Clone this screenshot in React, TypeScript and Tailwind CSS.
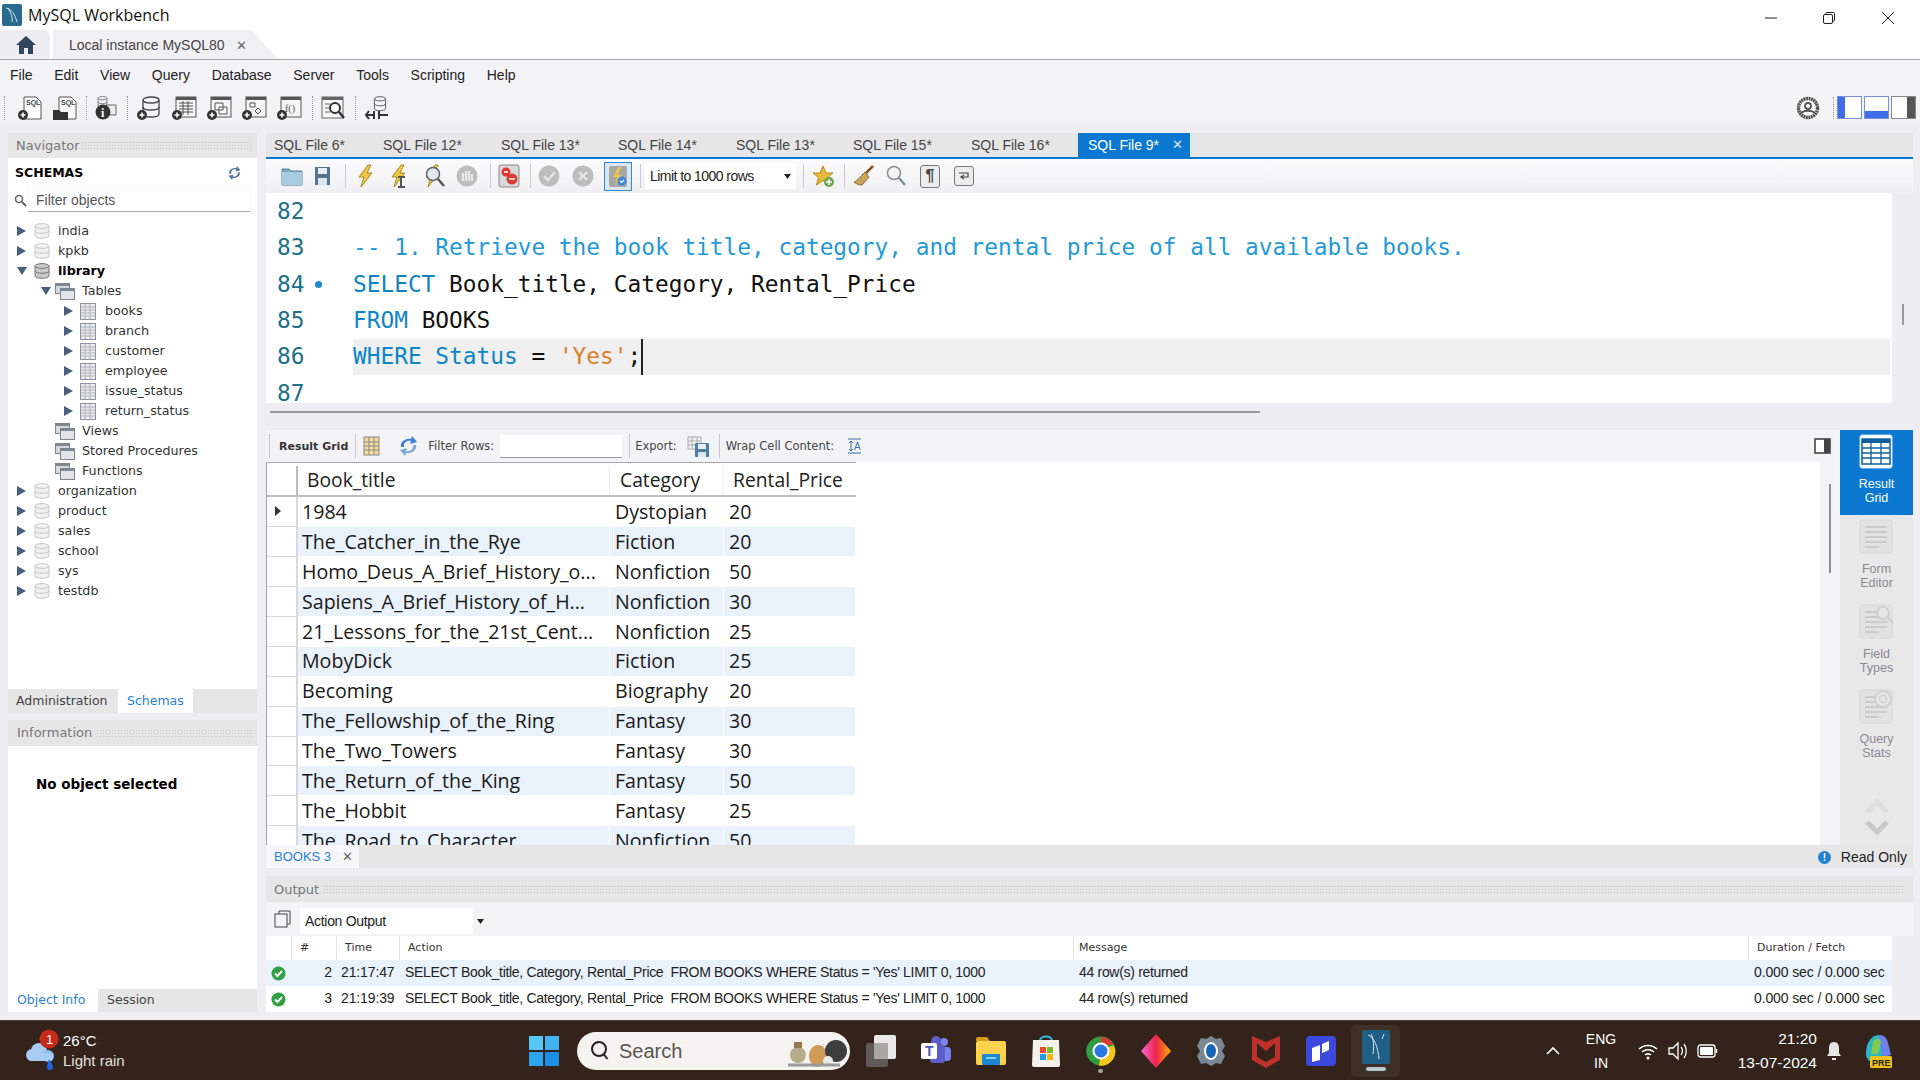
import React from "react";

const mono = "font-['DejaVu_Sans_Mono',monospace]";
const tahoma = "font-['DejaVu_Sans',sans-serif]";
const arial = "font-['Liberation_Sans',sans-serif]";
const segoe = "font-['Open_Sans',sans-serif]";
const dots = "flex-1 h-[9px] bg-[radial-gradient(#c2c2c2_0.8px,transparent_0.9px)] bg-[length:3px_3px]";

function Plus({ x = 0, y = 14 }: { x?: number; y?: number }) {
  return (
    <g transform={`translate(${x} ${y})`}>
      <circle cx="5" cy="5" r="5" fill="#333" />
      <path d="M2.5 5h5M5 2.5v5" stroke="#fff" strokeWidth="1.6" />
    </g>
  );
}

function Svg({ w = 25, h = 24, children }: { w?: number; h?: number; children: React.ReactNode }) {
  return (
    <svg width={w} height={h} viewBox={`0 0 ${w} ${h}`} className="block shrink-0">
      {children}
    </svg>
  );
}

function Sep() {
  return <div className="w-px h-[24px] bg-[#c9c9d0] shrink-0" />;
}

function SqlPage({ open }: { open?: boolean }) {
  return (
    <Svg>
      <path d="M6 1h12l5 5v17H6z" fill="#fff" stroke="#555" />
      <text x="8" y="9" fontSize="7" fontWeight="700" fill="#444" fontFamily="Liberation Sans">SQL</text>
      {open ? <path d="M0 14h6l2 2h7v8H0z" fill="#333" /> : <Plus y={14} />}
    </Svg>
  );
}

function DbGlyph({ x = 4, stroke = "#444", fill = "#f3f3f6" }: { x?: number; stroke?: string; fill?: string }) {
  return (
    <g fill={fill} stroke={stroke} strokeWidth="1.3">
      <path d={`M${x} 4v14c0 4 16 4 16 0V4`} />
      <ellipse cx={x + 8} cy="4" rx="8" ry="3" />
      <path d={`M${x} 11c0 4 16 4 16 0`} fill="none" />
    </g>
  );
}

function GridPage({ kind }: { kind: "table" | "view" | "proc" | "func" }) {
  return (
    <Svg>
      <rect x="4" y="1" width="20" height="20" fill="#f5f5f5" stroke="#555" />
      <rect x="4" y="1" width="20" height="3" fill="#555" />
      {kind === "table" && <path d="M7 7h14M7 10h14M7 13h14M7 16h14M11 5v14M16 5v14" stroke="#555" />}
      {kind === "view" && <path d="M8 7h8v7H8zM12 11h8v7h-8z" fill="none" stroke="#555" />}
      {kind === "proc" && <path d="M8 7h5v4H8zM16 12l3 3-3 3-3-3z" fill="none" stroke="#555" />}
      {kind === "func" && <text x="8" y="16" fontSize="10" fill="#555" fontFamily="Liberation Serif">f()</text>}
      <Plus y={14} />
    </Svg>
  );
}

function Bolt({ kind }: { kind?: "cursor" | "search" }) {
  return (
    <Svg>
      <path d="M14 1L5 13h5l-3 10 11-14h-5l4-8z" fill="#f0c543" stroke="#a88a2a" />
      {kind === "cursor" && <path d="M11 13h7M14 13v10M11 23h7" stroke="#555" strokeWidth="2" />}
      {kind === "search" && (
        <g>
          <circle cx="12" cy="10" r="6.5" fill="#dfe8ef" stroke="#666" strokeWidth="1.5" />
          <path d="M17 15l6 7" stroke="#555" strokeWidth="2.5" />
        </g>
      )}
    </Svg>
  );
}

function Round({ kind }: { kind: "check" | "cancel" | "hand" }) {
  return (
    <Svg>
      <circle cx="12" cy="12" r="10.5" fill="#bdbdbd" />
      {kind === "check" && <path d="M7 12l4 4 7-8" stroke="#e5e5e5" strokeWidth="2.4" fill="none" />}
      {kind === "cancel" && <path d="M8 8l8 8M16 8l-8 8" stroke="#e5e5e5" strokeWidth="2.4" />}
      {kind === "hand" && <path d="M8 17V9M11 17V7M14 17V7M17 17v-7" stroke="#e8e8e8" strokeWidth="2.2" />}
    </Svg>
  );
}

function TreeArrow({ open }: { open?: boolean }) {
  return open ? (
    <svg width="10" height="10" viewBox="0 0 10 10" className="block shrink-0"><path d="M0 1h10L5 9z" fill="#4a5f7e" /></svg>
  ) : (
    <svg width="9" height="10" viewBox="0 0 9 10" className="block shrink-0"><path d="M0 0l9 5-9 5z" fill="#4a5f7e" /></svg>
  );
}

function TreeDb({ active }: { active?: boolean }) {
  const stroke = active ? "#777" : "#c8c8c8";
  const fill = active ? "#c9c9c9" : "#f1f1f1";
  return (
    <svg width="16" height="16" viewBox="0 0 16 16" className="block shrink-0">
      <path d="M1 3v10c0 3 14 3 14 0V3" fill={fill} stroke={stroke} />
      <ellipse cx="8" cy="3" rx="7" ry="2.4" fill={fill} stroke={stroke} />
      <path d="M1 8c0 3 14 3 14 0" fill="none" stroke={stroke} />
    </svg>
  );
}

function TreeFolder() {
  return (
    <svg width="20" height="17" viewBox="0 0 20 17" className="block shrink-0">
      <rect x="0.5" y="0.5" width="14" height="10" fill="#d4d8dc" stroke="#7d8790" />
      <rect x="0.5" y="0.5" width="14" height="2.5" fill="#7d8790" />
      <rect x="5.5" y="5.5" width="14" height="11" fill="#e2e4e7" stroke="#7d8790" />
      <rect x="5.5" y="5.5" width="14" height="2.5" fill="#7d8790" />
    </svg>
  );
}

function TreeTable() {
  return (
    <svg width="16" height="17" viewBox="0 0 16 17" className="block shrink-0">
      <rect x="0.5" y="0.5" width="15" height="16" fill="#e9ebee" stroke="#8d959d" />
      <path d="M1 4h14M1 7h14M1 10h14M1 13h14M5 1v15M10 1v15" stroke="#b0b6bc" />
    </svg>
  );
}

function TreeRow({ level, label, kind, bold, arrow }: { level: 0 | 1 | 2; label: string; kind: "db" | "folder" | "table"; bold?: boolean; arrow?: "open" | "closed" }) {
  const arrowSlot = level === 0 ? "ml-[9px] w-[17px]" : level === 1 ? "ml-[33px] w-[14px]" : "ml-[56px] w-[16px]";
  const gap = bold || kind === "db" ? "ml-[8px]" : kind === "table" ? "ml-[9px]" : "ml-[7px]";
  return (
    <div className="flex items-center h-[20px]">
      <div className={arrowSlot}>{arrow && <TreeArrow open={arrow === "open"} />}</div>
      {kind === "db" && <TreeDb active={bold} />}
      {kind === "folder" && <TreeFolder />}
      {kind === "table" && <TreeTable />}
      <span className={`${tahoma} text-[12.7px] ${gap} ${bold ? "font-bold text-black" : "text-[#333]"}`}>{label}</span>
    </div>
  );
}

function Refresh({ w = 21, h = 20, c1 = "#3f7fd6", c2 = "#7fa6d8" }: { w?: number; h?: number; c1?: string; c2?: string }) {
  return (
    <svg width={w} height={h} viewBox="0 0 21 20" className="block shrink-0">
      <path d="M3 11C2 6 7 2 13 3l1-3 5 6-7 2 1-3C9 4 5 7 6 11z" fill={c1} />
      <path d="M18 9c1 5-4 9-10 8l-1 3-5-6 7-2-1 3c4 1 8-2 7-6z" fill={c2} />
    </svg>
  );
}

function Navigator() {
  return (
    <aside className="ml-[8px] w-[249px] shrink-0 flex flex-col">
      <div className="h-[25px] bg-[#e6e6e6] flex items-center pl-[8px] pr-[6px] gap-[1px]">
        <span className={`${tahoma} text-[13px] text-[#777]`}>Navigator</span>
        <div className={dots} />
      </div>
      <div className="h-[531px] bg-white flex flex-col">
        <div className="h-[30px] flex items-center justify-between pl-[7px] pr-[15px]">
          <span className={`${tahoma} text-[12.5px] font-bold text-black`}>SCHEMAS</span>
          <Refresh w={15} h={14} c1="#5d7690" c2="#5d7690" />
        </div>
        <div className="flex items-center h-[24px]">
          <svg width="13" height="13" viewBox="0 0 13 13" className="ml-[6px]"><circle cx="5" cy="5" r="3.5" fill="none" stroke="#666" strokeWidth="1.6" /><path d="M8 8l4 4" stroke="#666" strokeWidth="2" /></svg>
          <div className={`ml-[1px] w-[222px] h-[24px] border-b border-[#aaa] flex items-center pl-[8px] pt-[1px] ${arial} text-[14px] text-[#555] shadow-[0_0_1px_#ccc]`}>Filter objects</div>
        </div>
        <div className="pt-[9px]">
          <TreeRow level={0} label="india" kind="db" arrow="closed" />
          <TreeRow level={0} label="kpkb" kind="db" arrow="closed" />
          <TreeRow level={0} label="library" kind="db" bold arrow="open" />
          <TreeRow level={1} label="Tables" kind="folder" arrow="open" />
          {["books", "branch", "customer", "employee", "issue_status", "return_status"].map((t) => (
            <TreeRow key={t} level={2} label={t} kind="table" arrow="closed" />
          ))}
          {["Views", "Stored Procedures", "Functions"].map((t) => (
            <TreeRow key={t} level={1} label={t} kind="folder" />
          ))}
          {["organization", "product", "sales", "school", "sys", "testdb"].map((t) => (
            <TreeRow key={t} level={0} label={t} kind="db" arrow="closed" />
          ))}
        </div>
      </div>
      <div className={`h-[24px] bg-[#e6e6e6] flex ${tahoma} text-[12.5px]`}>
        <div className="w-[110px] flex items-center pl-[8px] text-[#444]">Administration</div>
        <div className="w-[75px] bg-white flex items-center pl-[9px] text-[#2c7fd6]">Schemas</div>
      </div>
      <div className="h-[26px] mt-[7px] bg-[#e6e6e6] flex items-center pl-[9px] pr-[6px] gap-[4px]">
        <span className={`${tahoma} text-[13px] text-[#777]`}>Information</span>
        <div className={dots} />
      </div>
      <div className="h-[243px] bg-white pl-[28px] pt-[25px]">
        <span className={`${tahoma} text-[13.5px] font-bold text-black`}>No object selected</span>
      </div>
      <div className={`h-[23px] bg-[#e6e6e6] flex ${tahoma} text-[12.5px]`}>
        <div className="w-[90px] bg-white flex items-center pl-[9px] text-[#2c7fd6]">Object Info</div>
        <div className="flex items-center pl-[9px] text-[#444]">Session</div>
      </div>
    </aside>
  );
}

const sqlTabs = [
  { t: "SQL File 6*", w: "w-[109px]" },
  { t: "SQL File 12*", w: "w-[118px]" },
  { t: "SQL File 13*", w: "w-[117px]" },
  { t: "SQL File 14*", w: "w-[118px]" },
  { t: "SQL File 13*", w: "w-[117px]" },
  { t: "SQL File 15*", w: "w-[118px]" },
  { t: "SQL File 16*", w: "w-[118px]" },
];

function SqlToolbar() {
  return (
    <div className="h-[34px] bg-gradient-to-b from-[#fbfbfc] to-[#f0f0f3] flex items-center shrink-0">
      <div className="ml-[15px]">
        <Svg w={22} h={20}><path d="M1 3h7l2 2h11v14H1z" fill="#7fa9c2" stroke="#5b7e96" /><rect x="1" y="6" width="20" height="13" fill="#a9cbe0" /></Svg>
      </div>
      <div className="ml-[11px]">
        <Svg w={17} h={20}><path d="M1 1h15v18H1z" fill="#55758e" /><rect x="4" y="2" width="9" height="6" fill="#e8eef2" /><rect x="4" y="12" width="9" height="7" fill="#dfe6eb" /></Svg>
      </div>
      <div className="ml-[14px]"><Sep /></div>
      <div className="ml-[8px]"><Bolt /></div>
      <div className="ml-[8px]"><Bolt kind="cursor" /></div>
      <div className="ml-[9px]"><Bolt kind="search" /></div>
      <div className="ml-[9px]"><Round kind="hand" /></div>
      <div className="ml-[10px]"><Sep /></div>
      <div className="ml-[7px]">
        <Svg w={22} h={24}>
          <rect x="1" y="1" width="20" height="22" rx="2" fill="#d9d9d9" stroke="#888" />
          <circle cx="8" cy="8" r="4.5" fill="#d93a32" />
          <circle cx="14" cy="15" r="5.5" fill="#d93a32" />
          <path d="M6 8h4M11 15h6" stroke="#fff" strokeWidth="1.6" />
        </Svg>
      </div>
      <div className="ml-[10px]"><Sep /></div>
      <div className="ml-[6px]"><Round kind="check" /></div>
      <div className="ml-[9px]"><Round kind="cancel" /></div>
      <div className="ml-[8px] w-[28px] h-[29px] border border-[#2f8ad6] bg-[#dbe6f0] flex items-center justify-center">
        <Svg w={20} h={23}>
          <rect x="1" y="1" width="18" height="21" rx="2" fill="#a7a7a7" />
          <path d="M10 2L5 12h4l-2 8 7-10h-4l3-8z" fill="#e8c552" />
          <circle cx="14" cy="16" r="4.5" fill="#3d88d6" />
          <path d="M12 16l1.5 1.5L16 15" stroke="#fff" strokeWidth="1.2" fill="none" />
        </Svg>
      </div>
      <div className="ml-[8px]"><Sep /></div>
      <div className={`ml-[4px] w-[151px] h-[26px] bg-white flex items-center justify-between pl-[5px] pr-[5px] ${arial} text-[14px] tracking-[-0.55px] text-[#222]`}>
        <span>Limit to 1000 rows</span>
        <svg width="7" height="5" viewBox="0 0 7 5"><path d="M0 0h7L3.5 5z" fill="#222" /></svg>
      </div>
      <div className="ml-[7px]"><Sep /></div>
      <div className="ml-[9px]">
        <Svg w={22} h={24}>
          <path d="M10 2l3 7h7l-5.500 4.500L16.500 21 10 16.500 3.500 21l2-7.500L0 9h7z" fill="#e8b83a" stroke="#b98c1e" />
          <circle cx="16" cy="18" r="5" fill="#6aa64a" />
          <path d="M13 18h6M16 15v6" stroke="#fff" strokeWidth="1.5" />
        </Svg>
      </div>
      <div className="ml-[9px]"><Sep /></div>
      <div className="ml-[8px]">
        <Svg w={22} h={22}>
          <path d="M20 1L11 10" stroke="#7a5a2c" strokeWidth="2.5" />
          <path d="M12 7l4 5-7 8c-3 0-6-1-8-3 3-1 6-5 11-10z" fill="#c9a45c" stroke="#8e7238" />
        </Svg>
      </div>
      <div className="ml-[11px]">
        <Svg w={20} h={22}>
          <circle cx="8" cy="8" r="6.5" fill="#f4f4f4" stroke="#8d8d8d" strokeWidth="1.5" />
          <path d="M13 13l6 7" stroke="#7d8b98" strokeWidth="2.2" />
        </Svg>
      </div>
      <div className="ml-[14px] w-[20px] h-[23px] border border-[#777] rounded-[3px] bg-[#ececec] flex items-center justify-center text-[16px] font-bold text-[#444]">
        <span className={arial}>¶</span>
      </div>
      <div className="ml-[14px] w-[20px] h-[20px] border border-[#777] rounded-[3px] bg-[#ececec] flex items-center justify-center">
        <svg width="12" height="10" viewBox="0 0 12 10"><path d="M1 2h9v4H4M6 4L3 6l3 2" fill="none" stroke="#444" strokeWidth="1.2" /></svg>
      </div>
    </div>
  );
}

const kw = "text-[#0e85c6]";

function Editor() {
  const lines: React.ReactNode[] = [
    null,
    <span className="text-[#1f9ad8]">-- 1. Retrieve the book title, category, and rental price of all available books.</span>,
    <><span className={kw}>SELECT</span><span className="text-[#111]"> Book_title, Category, Rental_Price</span></>,
    <><span className={kw}>FROM</span><span className="text-[#111]"> BOOKS</span></>,
    <><span className={kw}>WHERE Status</span><span className="text-[#111]"> = </span><span className="text-[#d9822b]">'Yes'</span><span className="text-[#111]">;</span></>,
    null,
  ];
  return (
    <div className="h-[210px] flex shrink-0">
      <div className={`flex-1 bg-white overflow-hidden pt-[1px] rounded-br-[2px] ${mono} text-[22.8px]`}>
        {lines.map((line, i) => (
          <div key={i} className="flex items-center h-[36.3px]">
            <div className="w-[87px] shrink-0 flex items-center pl-[11px] pb-[2px]">
              <span className="text-[#1f7188] w-[29px]">{82 + i}</span>
              {i === 2 && <div className="ml-[9px] mt-[2px] w-[7px] h-[7px] rounded-full bg-[#1e88cf]" />}
            </div>
            <div className={`flex-1 h-full mr-[2px] flex items-center ${i === 4 ? "bg-[#efefef]" : ""}`}>
              <span className="whitespace-pre pb-[2px]">{line}</span>
              {i === 4 && <div className="w-[2px] h-[36px] bg-[#222]" />}
            </div>
          </div>
        ))}
      </div>
      <div className="w-[21px] shrink-0 flex justify-center pl-[1px]">
        <div className="mt-[111px] w-[2px] h-[21px] bg-[#999]" />
      </div>
    </div>
  );
}

const rows = [
  ["1984", "Dystopian", "20"],
  ["The_Catcher_in_the_Rye", "Fiction", "20"],
  ["Homo_Deus_A_Brief_History_o...", "Nonfiction", "50"],
  ["Sapiens_A_Brief_History_of_H...", "Nonfiction", "30"],
  ["21_Lessons_for_the_21st_Cent...", "Nonfiction", "25"],
  ["MobyDick", "Fiction", "25"],
  ["Becoming", "Biography", "20"],
  ["The_Fellowship_of_the_Ring", "Fantasy", "30"],
  ["The_Two_Towers", "Fantasy", "30"],
  ["The_Return_of_the_King", "Fantasy", "50"],
  ["The_Hobbit", "Fantasy", "25"],
  ["The_Road_to_Character", "Nonfiction", "50"],
];

function ResultGrid() {
  return (
    <div className="flex-1 h-[383px] bg-white overflow-hidden">
      <div className="w-[590px] border-l border-t border-[#a8a8a8]">
        <div className={`grid grid-cols-[31px_312px_114px_132px] h-[34px] pt-[3px] border-b-2 border-[#bdbdbd] ${segoe} text-[19.3px] text-[#222]`}>
          <div className="border-r-2 border-[#bdbdbd]" />
          <div className="border-r border-[#eee] pl-[9px] flex items-center">Book_title</div>
          <div className="border-r border-[#eee] pl-[10px] flex items-center">Category</div>
          <div className="pl-[9px] flex items-center">Rental_Price</div>
        </div>
        {rows.map((r, i) => (
          <div key={i} className={`grid grid-cols-[31px_312px_114px_132px] h-[29.94px] ${segoe} text-[19.6px] text-[#1a1a1a]`}>
            <div className="border-r-2 border-b border-[#d9d9d9] flex items-center pl-[8px]">
              {i === 0 && <svg width="6" height="10" viewBox="0 0 6 10"><path d="M0 0l6 5-6 5z" fill="#333" /></svg>}
            </div>
            {r.map((c, j) => (
              <div key={j} className={`flex items-center ${j === 0 ? "pl-[4px]" : "pl-[5px]"} border-b border-r border-white whitespace-nowrap overflow-hidden ${i % 2 === 1 ? "bg-[#e9f1fb]" : "bg-white"}`}>{c}</div>
            ))}
          </div>
        ))}
      </div>
    </div>
  );
}

function SideTile({ l1, l2, active, mark }: { l1: string; l2: string; active?: boolean; mark?: "search" | "clock" }) {
  return (
    <div className="flex flex-col items-center">
      <svg width="38" height="38" viewBox="0 0 38 38" className="block">
        <rect x="2" y="2" width="32" height="33" rx="2" fill={active ? "#fff" : "#e2e2e2"} stroke={active ? "#d4e6f5" : "#d8d8d8"} />
        {active ? (
          <g>
            <rect x="4" y="6" width="28" height="25" fill="none" stroke="#0f5f9e" strokeWidth="1.5" />
            <rect x="4" y="6" width="28" height="4" fill="#0f5f9e" />
            <path d="M4 15h28M4 20h28M4 25h28M13 10v21M23 10v21" stroke="#0f5f9e" strokeWidth="1.3" />
          </g>
        ) : (
          <path d="M7 9h22M7 14h22M7 19h22M7 24h22M7 29h14" stroke="#c4c4c4" strokeWidth="1.5" />
        )}
        {mark === "search" && <g><circle cx="25" cy="10" r="6" fill="#e6e6e6" stroke="#cfcfcf" strokeWidth="2" /><path d="M29 14l6 6" stroke="#cfcfcf" strokeWidth="2" /></g>}
        {mark === "clock" && <g><circle cx="25" cy="11" r="8" fill="#e6e6e6" stroke="#cfcfcf" strokeWidth="2" /><circle cx="25" cy="11" r="3.5" fill="none" stroke="#cfcfcf" strokeWidth="1.5" /></g>}
      </svg>
      <div className={`mt-[6px] ${arial} text-center text-[12.5px] leading-[14px] ${active ? "text-white" : "text-[#8a8a90]"}`}>{l1}<br />{l2}</div>
    </div>
  );
}

function ResultPanel() {
  return (
    <div className="h-[415px] flex shrink-0">
      <div className="flex-1 flex flex-col min-w-0">
        <div className={`h-[32px] bg-[#f3f3f6] flex items-center ${tahoma} text-[11.5px] text-[#444] shrink-0`}>
          <div className="ml-[3px]"><Sep /></div>
          <span className="ml-[9px] mt-[2px] font-bold text-[11px] text-[#333]">Result Grid</span>
          <div className="ml-[7px]"><Sep /></div>
          <div className="ml-[7px]">
            <Svg w={17} h={20}><rect x="1" y="1" width="15" height="18" fill="#f4dc9c" stroke="#888" /><path d="M1 6h15M1 10h15M1 14h15M6 1v18M11 1v18" stroke="#888" /></Svg>
          </div>
          <div className="ml-[18px]"><Refresh /></div>
          <span className="ml-[9px] mt-[2px]">Filter Rows:</span>
          <div className="ml-[6px] mt-[1px] w-[122px] h-[23px] bg-white border-b border-[#999]" />
          <div className="ml-[7px]"><Sep /></div>
          <span className="ml-[5px] mt-[2px]">Export:</span>
          <div className="ml-[10px]">
            <Svg w={22} h={22}>
              <path d="M1 2h13v12H1zM1 6h13M1 10h13M5 2v12M10 2v12" fill="none" stroke="#aaa" />
              <rect x="8" y="8" width="14" height="14" rx="1" fill="#4d7da3" />
              <rect x="11" y="9" width="8" height="5" fill="#e8eef2" />
              <rect x="11" y="17" width="8" height="5" fill="#dfe6eb" />
            </Svg>
          </div>
          <div className="ml-[10px]"><Sep /></div>
          <span className="ml-[6px] mt-[2px]">Wrap Cell Content:</span>
          <div className="ml-[13px]">
            <Svg w={15} h={16}><path d="M1 1h13M1 15h13M4 3v10M2 5l2-2 2 2M2 11l2 2 2-2" fill="none" stroke="#3b6fa0" /><text x="7" y="12" fontSize="10" fill="#3b6fa0" fontFamily="Liberation Sans">A</text></Svg>
          </div>
          <div className="ml-auto mr-[9px]">
            <svg width="17" height="16" viewBox="0 0 17 16" className="block"><rect x="1" y="1" width="15" height="14" fill="#fff" stroke="#444" strokeWidth="1.6" /><rect x="10" y="1" width="6" height="14" fill="#444" /></svg>
          </div>
        </div>
        <div className="flex-1 flex min-h-0">
          <ResultGrid />
          <div className="w-[20px] bg-[#f3f3f6] flex justify-center shrink-0 pr-[1px]">
            <div className="mt-[22px] w-[2px] h-[89px] bg-[#8d8d8d]" />
          </div>
        </div>
      </div>
      <div className="w-[73px] bg-[#e8e8e8] flex flex-col items-center shrink-0">
        <div className="w-full h-[85px] bg-[#0a78d1] flex justify-center pt-[3px]">
          <SideTile l1="Result" l2="Grid" active />
        </div>
        <div className="mt-[3px]"><SideTile l1="Form" l2="Editor" /></div>
        <div className="mt-[13px]"><SideTile l1="Field" l2="Types" mark="search" /></div>
        <div className="mt-[13px]"><SideTile l1="Query" l2="Stats" mark="clock" /></div>
        <svg width="24" height="40" viewBox="0 0 24 40" className="mt-[38px]">
          <path d="M2 14l10-10 10 10" fill="none" stroke="#dedede" strokeWidth="5" />
          <path d="M2 24l10 10 10-10" fill="none" stroke="#c9c9c9" strokeWidth="5" />
        </svg>
      </div>
    </div>
  );
}

function OkIcon() {
  return (
    <svg width="15" height="15" viewBox="0 0 15 15" className="block"><circle cx="7.5" cy="7.5" r="7" fill="#2f9e44" /><path d="M4 7.5l2.5 2.5L11 5" fill="none" stroke="#fff" strokeWidth="2" /></svg>
  );
}

const outCols = "grid grid-cols-[26px_45px_63px_674px_675px_1fr]";

function OutputRow({ n, time, bg }: { n: string; time: string; bg: string }) {
  const sql = "SELECT Book_title, Category, Rental_Price  FROM BOOKS WHERE Status = 'Yes' LIMIT 0, 1000";
  return (
    <div className={`${outCols} h-[26px] items-center pb-[2px] ${bg} ${arial} text-[14px] tracking-[-0.12px] text-[#222] whitespace-pre`}>
      <div className="pl-[5px] pt-[2px]"><OkIcon /></div>
      <div className="text-right pr-[5px]">{n}</div>
      <div className="pl-[4px]">{time}</div>
      <div className="pl-[5px] tracking-[-0.31px]">{sql}</div>
      <div className="pl-[5px] tracking-[-0.31px]">44 row(s) returned</div>
      <div className="pl-[5px]">0.000 sec / 0.000 sec</div>
    </div>
  );
}

function OutputPanel() {
  return (
    <div className="flex flex-col shrink-0">
      <div className="h-[26px] bg-[#e6e6e6] flex items-center pl-[8px] pr-[10px] pt-[1px] gap-[4px]">
        <span className={`${tahoma} text-[13px] text-[#777]`}>Output</span>
        <div className={dots} />
      </div>
      <div className="h-[34px] bg-[#f3f3f6] flex items-center">
        <svg width="17" height="18" viewBox="0 0 17 18" className="ml-[8px]"><path d="M5 4V1h11v13h-3" fill="none" stroke="#444" /><rect x="1" y="4" width="12" height="13" fill="#f3f3f6" stroke="#444" /></svg>
        <div className={`ml-[9px] mt-[4px] w-[187px] h-[26px] bg-white flex items-center justify-between ${arial} text-[14px] tracking-[-0.3px] text-[#222]`}>
          <span className="pl-[5px]">Action Output</span>
          <div className="w-[14px] h-full bg-[#f3f3f3] flex items-center justify-center">
            <svg width="7" height="5" viewBox="0 0 7 5"><path d="M0 0h7L3.5 5z" fill="#222" /></svg>
          </div>
        </div>
      </div>
      <div className="mr-[21px] bg-white">
        <div className={`${outCols} h-[24px] items-center ${tahoma} text-[11px] text-[#333]`}>
          <div className="h-full border-r border-[#e4e4e4]" />
          <div className="h-full border-r border-[#e4e4e4] pl-[8px] pt-[1px] flex items-center">#</div>
          <div className="h-full border-r border-[#e4e4e4] pl-[8px] pt-[1px] flex items-center">Time</div>
          <div className="h-full border-r border-[#e4e4e4] pl-[8px] pt-[1px] flex items-center">Action</div>
          <div className="h-full border-r border-[#e4e4e4] pl-[5px] pt-[1px] flex items-center">Message</div>
          <div className="h-full pl-[8px] pt-[1px] flex items-center">Duration / Fetch</div>
        </div>
        <OutputRow n="2" time="21:17:47" bg="bg-[#e9f1fb]" />
        <OutputRow n="3" time="21:19:39" bg="bg-white" />
      </div>
    </div>
  );
}

function MainArea() {
  return (
    <main className="ml-[9px] w-[1647px] shrink-0 flex flex-col">
      <div className={`h-[24px] bg-[#e6e6e6] flex items-stretch ${arial} text-[14px] text-[#444] shrink-0`}>
        {sqlTabs.map((tab, i) => (
          <div key={i} className={`${tab.w} pl-[8px] flex items-center shrink-0`}>{tab.t}</div>
        ))}
        <div className="ml-[-3px] w-[112px] bg-[#0a78d1] text-white flex items-center justify-between pl-[10px] pr-[7px]">
          <span>SQL File 9*</span>
          <span className="text-[#dbe9f6] text-[13px]">✕</span>
        </div>
      </div>
      <div className="h-[2px] bg-[#0a78d1] shrink-0" />
      <SqlToolbar />
      <Editor />
      <div className="h-[27px] shrink-0 pt-[8px] pl-[4px]">
        <div className="w-[990px] h-[2px] bg-[#9a9a9a]" />
      </div>
      <ResultPanel />
      <div className="h-[23px] bg-[#e6e6e6] flex items-center shrink-0">
        <div className={`w-[93px] h-full bg-[#f7f7f9] flex items-center pl-[8px] ${arial} text-[13px] text-[#2c7fd6] whitespace-nowrap`}>
          <span>BOOKS 3</span>
          <span className="ml-[11px] text-[#666]">✕</span>
        </div>
        <div className="ml-auto flex items-center gap-[10px] pr-[6px] pt-[1px]">
          <div className={`w-[13px] h-[13px] rounded-full bg-[#1f7fd1] text-white text-[10px] font-bold flex items-center justify-center ${arial}`}>!</div>
          <span className={`${arial} text-[14px] text-[#222]`}>Read Only</span>
        </div>
      </div>
      <div className="h-[8px] shrink-0" />
      <OutputPanel />
    </main>
  );
}

function TopBars() {
  const menus = ["File", "Edit", "View", "Query", "Database", "Server", "Tools", "Scripting", "Help"];
  return (
    <>
      <div className="h-[30px] bg-white flex items-center shrink-0">
        <svg width="20" height="22" viewBox="0 0 20 22" className="ml-[2px] block">
          <rect width="20" height="22" rx="2" fill="#2b6a8f" />
          <path d="M4 4c5 1 9 6 11 14M6 4c3 5 5 10 4 14" fill="none" stroke="#cfe3ee" strokeWidth="1" />
        </svg>
        <span className={`ml-[6px] ${segoe} text-[16px] text-[#111]`}>MySQL Workbench</span>
        <div className="ml-auto flex items-center pt-[6px]">
          <svg width="14" height="14" viewBox="0 0 14 14"><path d="M1 7h12" stroke="#222" /></svg>
          <svg width="14" height="14" viewBox="0 0 14 14" className="ml-[44px]"><rect x="1.5" y="3.5" width="9" height="9" rx="1.5" fill="none" stroke="#222" /><path d="M4 3.500V2.500a1 1 0 0 1 1-1h6.500a1 1 0 0 1 1 1V9a1 1 0 0 1-1 1h-1" fill="none" stroke="#222" /></svg>
          <svg width="14" height="14" viewBox="0 0 14 14" className="ml-[45px] mr-[25px]"><path d="M1 1l12 12M13 1L1 13" stroke="#222" /></svg>
        </div>
      </div>
      <div className="h-[30px] bg-white border-b border-[#a6a6a6] flex items-end shrink-0">
        <div className="w-[50px] h-[29px] bg-[#eeeef2] rounded-tr-[6px] flex items-center justify-center pl-[2px] pt-[1px]">
          <svg width="22" height="20" viewBox="0 0 22 20"><path d="M11 1L1 10h3v9h5v-6h4v6h5v-9h3z" fill="#31465e" /></svg>
        </div>
        <div className={`ml-[3px] w-[225px] h-[29px] pt-[2px] bg-[#f0f0f3] [clip-path:polygon(0_0,88%_0,100%_100%,0_100%)] flex items-center pl-[16px] ${arial} text-[14px] text-[#444]`}>
          Local instance MySQL80
          <span className="ml-[11px] text-[#666] text-[13px]">✕</span>
        </div>
      </div>
      <div className={`h-[30px] bg-[#f3f3f6] flex items-center pl-[10px] gap-[21.7px] ${arial} text-[14px] text-[#222] shrink-0`}>
        {menus.map((m) => <span key={m}>{m}</span>)}
      </div>
      <div className="h-[35px] bg-[#f3f3f6] flex items-center shrink-0">
        <div className="ml-[4px] h-[24px] w-px border-l border-dotted border-[#99a]" />
        <div className="ml-[13px]"><SqlPage /></div>
        <div className="ml-[10px]"><SqlPage open /></div>
        <div className="ml-[8px] h-[24px] w-px border-l border-dotted border-[#99a]" />
        <div className="ml-[8px]">
          <Svg w={22} h={24}>
            <g transform="translate(2 0) scale(0.55)"><DbGlyph x={2} stroke="#555" /></g>
            <path d="M11 9h10v10H11z" fill="#eee" stroke="#666" />
            <circle cx="8" cy="16" r="7.5" fill="#333" />
            <text x="6" y="21" fontSize="12" fontWeight="700" fill="#fff" fontFamily="Liberation Serif">i</text>
          </Svg>
        </div>
        <div className="ml-[10px] h-[24px] w-px border-l border-dotted border-[#99a]" />
        <div className="ml-[9px]"><Svg><DbGlyph x={6} /><Plus y={14} /></Svg></div>
        <div className="ml-[10px]"><GridPage kind="table" /></div>
        <div className="ml-[10px]"><GridPage kind="view" /></div>
        <div className="ml-[10px]"><GridPage kind="proc" /></div>
        <div className="ml-[10px]"><GridPage kind="func" /></div>
        <div className="ml-[10px] h-[24px] w-px border-l border-dotted border-[#99a]" />
        <div className="ml-[8px]">
          <Svg w={24} h={24}>
            <rect x="1" y="1" width="21" height="21" fill="#f5f5f5" stroke="#666" />
            <rect x="1" y="1" width="21" height="3" fill="#666" />
            <path d="M4 8h5M4 12h5M4 16h5" stroke="#666" />
            <circle cx="14" cy="12" r="5" fill="#fff" stroke="#333" strokeWidth="2" />
            <path d="M18 16l5 6" stroke="#333" strokeWidth="2.5" />
          </Svg>
        </div>
        <div className="ml-[10px] h-[24px] w-px border-l border-dotted border-[#99a]" />
        <div className="ml-[8px]">
          <Svg>
            <g transform="translate(9 0) scale(0.7)"><DbGlyph x={2} stroke="#555" /></g>
            <path d="M2 19h8M15 19h9M5 15l-3 4 3 4M10 15v8M15 15v8" fill="none" stroke="#333" strokeWidth="2" />
          </Svg>
        </div>
        <div className="ml-auto flex items-center">
          <svg width="24" height="24" viewBox="0 0 24 24" className="block">
            <circle cx="12" cy="12" r="9.5" fill="#fff" stroke="#555" strokeWidth="3.5" strokeDasharray="2 0.5" />
            <circle cx="12" cy="10" r="3" fill="none" stroke="#555" strokeWidth="1.8" />
            <path d="M5 17c3-3 11-3 14 0" fill="none" stroke="#555" strokeWidth="1.8" />
          </svg>
          <div className="ml-[13px] mr-[3px] h-[22px] border-l border-dotted border-[#99a]" />
          <div className="w-[25px] h-[23px] border border-[#7a8ee0] bg-white flex">
            <div className="w-[7px] bg-[#3f6ee8]" />
          </div>
          <div className="ml-[2px] w-[25px] h-[23px] border border-[#7a8ee0] bg-white flex flex-col justify-end">
            <div className="h-[7px] bg-[#3f6ee8]" />
          </div>
          <div className="ml-[2px] w-[25px] h-[23px] border border-[#888] bg-white flex justify-end">
            <div className="w-[8px] bg-[#555]" />
          </div>
          <div className="w-[4px]" />
        </div>
      </div>
    </>
  );
}

function TaskSlot({ children }: { children: React.ReactNode }) {
  return <div className="w-[55px] h-full flex items-center justify-center shrink-0">{children}</div>;
}

function Taskbar() {
  return (
    <footer className="h-[60px] bg-[#33231a] border-t border-[#4a3a30] flex items-center shrink-0 text-white">
      <div className="w-[529px] shrink-0 flex items-center pl-[24px]">
        <svg width="36" height="44" viewBox="0 0 36 44" className="block shrink-0">
          <circle cx="15" cy="22" r="8" fill="#a8cdf5" />
          <circle cx="8" cy="26" r="6" fill="#a8cdf5" />
          <circle cx="24" cy="27" r="6" fill="#8cbbed" />
          <rect x="4" y="24" width="25" height="8" rx="4" fill="#a8cdf5" />
          <path d="M25 30c2 4 4 6 4 8a3 3 0 0 1-6 0c0-2 1-4 2-8z" fill="#2266e0" />
          <circle cx="25" cy="10" r="9.500" fill="#c42b1c" />
          <text x="22" y="15" fontSize="13" fill="#fff" fontFamily="Liberation Sans">1</text>
        </svg>
        <div className={`ml-[3px] ${arial} text-[15px] leading-[20px]`}>
          <div>26°C</div>
          <div className="text-[#e6e1dc]">Light rain</div>
        </div>
      </div>
      <svg width="30" height="30" viewBox="0 0 30 30" className="block shrink-0">
        <rect width="14" height="14" fill="#57c7f5" />
        <rect x="16" width="14" height="14" fill="#3fb4f0" />
        <rect y="16" width="14" height="14" fill="#2aa5ee" />
        <rect x="16" y="16" width="14" height="14" fill="#1b8fe6" />
      </svg>
      <div className="ml-[18px] w-[273px] h-[38px] rounded-full bg-[#f5f3ef] flex items-center pl-[13px] shrink-0">
        <svg width="20" height="21" viewBox="0 0 20 21"><circle cx="9" cy="9" r="7" fill="none" stroke="#222" strokeWidth="2" /><path d="M13.500 14l4 5" stroke="#222" strokeWidth="2" /></svg>
        <span className={`ml-[9px] ${arial} text-[20px] text-[#555]`}>Search</span>
        <svg width="64" height="34" viewBox="0 0 64 34" className="ml-auto mr-[2px]">
          <circle cx="14" cy="21" r="8" fill="#b6ad8c" />
          <rect x="10" y="8" width="8" height="6" fill="#96794f" />
          <ellipse cx="34" cy="22" rx="9" ry="11" fill="#d19a57" />
          <circle cx="52" cy="17" r="11" fill="#3d3d3d" />
          <circle cx="44" cy="27" r="5" fill="#e8e8e8" />
          <path d="M4 31h52" stroke="#9a9a9a" strokeWidth="3" />
        </svg>
      </div>
      <div className="w-[3px] shrink-0" />
      <TaskSlot>
        <svg width="30" height="32" viewBox="0 0 30 32"><rect x="0" y="8" width="22" height="24" rx="2" fill="#5f5a55" /><rect x="8" y="0" width="22" height="24" rx="2" fill="#e9e9e9" /><rect x="8" y="8" width="14" height="16" fill="#aaa7a3" /></svg>
      </TaskSlot>
      <TaskSlot>
        <svg width="30" height="30" viewBox="0 0 30 30"><circle cx="23" cy="6" r="4" fill="#7b83eb" /><rect x="18" y="11" width="12" height="14" rx="4" fill="#7b83eb" /><circle cx="15" cy="5" r="5" fill="#5b5fc7" /><rect x="9" y="9" width="15" height="18" rx="3" fill="#5b5fc7" /><rect x="0" y="7" width="16" height="16" rx="2" fill="#fff" /><text x="4" y="20" fontSize="14" fontWeight="700" fill="#4b53bc" fontFamily="Liberation Sans">T</text></svg>
      </TaskSlot>
      <TaskSlot>
        <svg width="30" height="28" viewBox="0 0 30 28"><path d="M0 2a2 2 0 0 1 2-2h9l3 4H0z" fill="#d79a17" /><rect y="4" width="30" height="24" rx="2" fill="#ffd24d" /><rect x="6" y="17" width="18" height="11" rx="1" fill="#1b88d4" /><path d="M10 21h10" stroke="#8fd0f5" strokeWidth="2" /></svg>
      </TaskSlot>
      <TaskSlot>
        <svg width="30" height="32" viewBox="0 0 30 32"><path d="M9 6c0-6 12-6 12 0" fill="none" stroke="#37b4e6" strokeWidth="2" /><path d="M2 5h26l1 25a2 2 0 0 1-2 2H3a2 2 0 0 1-2-2z" fill="#f4f1ed" /><rect x="9" y="12" width="6" height="6" fill="#e64a2e" /><rect x="16" y="12" width="6" height="6" fill="#7cb928" /><rect x="9" y="19" width="6" height="6" fill="#1b9de0" /><rect x="16" y="19" width="6" height="6" fill="#f5b50f" /></svg>
      </TaskSlot>
      <TaskSlot>
        <div className="flex flex-col items-center pt-[8px]">
          <svg width="30" height="30" viewBox="0 0 30 30"><circle cx="15" cy="15" r="14.500" fill="#2f9e44" /><path d="M15 1a14 14 0 0 1 12.500 8H15z" fill="#d93a2b" /><path d="M2 8a14 14 0 0 0 8 20l5-13z" fill="#2f9e44" /><path d="M27.500 9A14 14 0 0 1 13 29.500L15 15z" fill="#f5c518" /><circle cx="15" cy="15" r="7.500" fill="#2b78e0" stroke="#fff" strokeWidth="2" /></svg>
          <div className="mt-[3px] w-[5px] h-[4px] rounded-full bg-[#a7a19b]" />
        </div>
      </TaskSlot>
      <TaskSlot>
        <svg width="30" height="34" viewBox="0 0 30 34"><defs><linearGradient id="dia" x1="0" x2="1" y1="0" y2="0"><stop offset="0" stopColor="#f06ad0" /><stop offset="0.5" stopColor="#f0224d" /><stop offset="1" stopColor="#ffb000" /></linearGradient></defs><path d="M15 0l15 17-15 17L0 17z" fill="url(#dia)" /></svg>
      </TaskSlot>
      <TaskSlot>
        <svg width="30" height="32" viewBox="0 0 30 32"><path d="M15 1l5 3 5-1 4 8-3 5 3 5-4 8-5-1-5 3-5-3-5 1-4-8 3-5-3-5 4-8 5 1z" fill="#7a8794" /><ellipse cx="15" cy="16" rx="7" ry="9" fill="#fff" /><ellipse cx="15" cy="16" rx="5" ry="7" fill="#1565b8" /></svg>
      </TaskSlot>
      <TaskSlot>
        <svg width="28" height="34" viewBox="0 0 28 34"><path d="M0 2l14 6 14-6v24l-14 8-14-8z" fill="#c0302a" /><path d="M5 9l9 8 9-8v14l-9 5-9-5z" fill="#33231a" /></svg>
      </TaskSlot>
      <TaskSlot>
        <svg width="30" height="30" viewBox="0 0 30 30"><rect width="30" height="30" rx="4" fill="#3b49df" /><path d="M6 12l8-3v15l-8 2zM16 8l7-3v9l-7 3z" fill="#fff" /></svg>
      </TaskSlot>
      <div className="w-[55px] h-full flex items-center justify-center shrink-0">
        <div className="w-[49px] h-[52px] rounded-[5px] bg-[#3f3026] flex flex-col items-center justify-center gap-[3px]">
          <svg width="28" height="34" viewBox="0 0 28 34"><rect width="28" height="34" rx="2" fill="#1f5f85" /><path d="M6 5c6 2 10 12 11 24M9 4c3 5 3 14 2 20M22 4l-2 5" fill="none" stroke="#d5e6ef" /></svg>
          <div className="w-[20px] h-[4px] rounded-full bg-[#b8c8d2]" />
        </div>
      </div>
      <svg width="14" height="9" viewBox="0 0 14 9" className="ml-[143px] shrink-0"><path d="M1 8l6-6 6 6" fill="none" stroke="#fff" strokeWidth="1.6" /></svg>
      <div className={`ml-[17px] w-[48px] text-center ${arial} text-[14px] leading-[24px] shrink-0`}>
        <div>ENG</div>
        <div>IN</div>
      </div>
      <svg width="20" height="18" viewBox="0 0 20 18" className="ml-[13px] shrink-0"><path d="M1 7a13 13 0 0 1 18 0M4 10a9 9 0 0 1 12 0M7 13a5 5 0 0 1 6 0" fill="none" stroke="#fff" strokeWidth="1.5" /><circle cx="10" cy="16" r="1.500" fill="#fff" /></svg>
      <svg width="20" height="20" viewBox="0 0 20 20" className="ml-[10px] shrink-0"><path d="M1 7h4l5-5v16l-5-5H1z" fill="none" stroke="#fff" strokeWidth="1.3" /><path d="M13 6c2 2 2 6 0 8M16 3c3 4 3 10 0 14" fill="none" stroke="#fff" strokeWidth="1.3" /></svg>
      <svg width="21" height="14" viewBox="0 0 21 14" className="ml-[9px] shrink-0"><rect x="1" y="1" width="17" height="12" rx="2.500" fill="none" stroke="#fff" strokeWidth="1.3" /><rect x="3" y="3" width="13" height="8" rx="1" fill="#fff" /><path d="M19.500 5v4" stroke="#fff" strokeWidth="1.500" /></svg>
      <div className={`w-[99px] text-right ${arial} text-[15.5px] leading-[24px] shrink-0`}>
        <div>21:20</div>
        <div>13-07-2024</div>
      </div>
      <svg width="18" height="20" viewBox="0 0 18 20" className="ml-[8px] shrink-0"><path d="M9 1c4 0 5 3 5 7v4l2 3H2l2-3V8c0-4 1-7 5-7z" fill="#e6e6e6" /><path d="M7 17h4v2H7z" fill="#e6e6e6" /></svg>
      <svg width="30" height="34" viewBox="0 0 30 34" className="ml-[20px] shrink-0">
        <path d="M3 22C2 10 8 1 16 1l6 18-7 8H6z" fill="#2bb5c7" />
        <path d="M16 1c5 0 8 3 9 8l3 12-8 2z" fill="#6e7ff0" />
        <path d="M10 8c3-5 7-4 8 0l-3 12H8z" fill="#83c94f" />
        <rect x="7" y="22" width="22" height="12" rx="1.500" fill="#f2c21a" />
        <text x="9" y="31.500" fontSize="9" fontWeight="700" fill="#222" fontFamily="Liberation Sans">PRE</text>
      </svg>
    </footer>
  );
}

export default function App() {
  return (
    <div className="w-[1920px] h-[1080px] overflow-hidden bg-[#eeeef2] flex flex-col">
      <TopBars />
      <div className="flex-1 flex pt-[8px] min-h-0">
        <Navigator />
        <MainArea />
      </div>
      <Taskbar />
    </div>
  );
}
